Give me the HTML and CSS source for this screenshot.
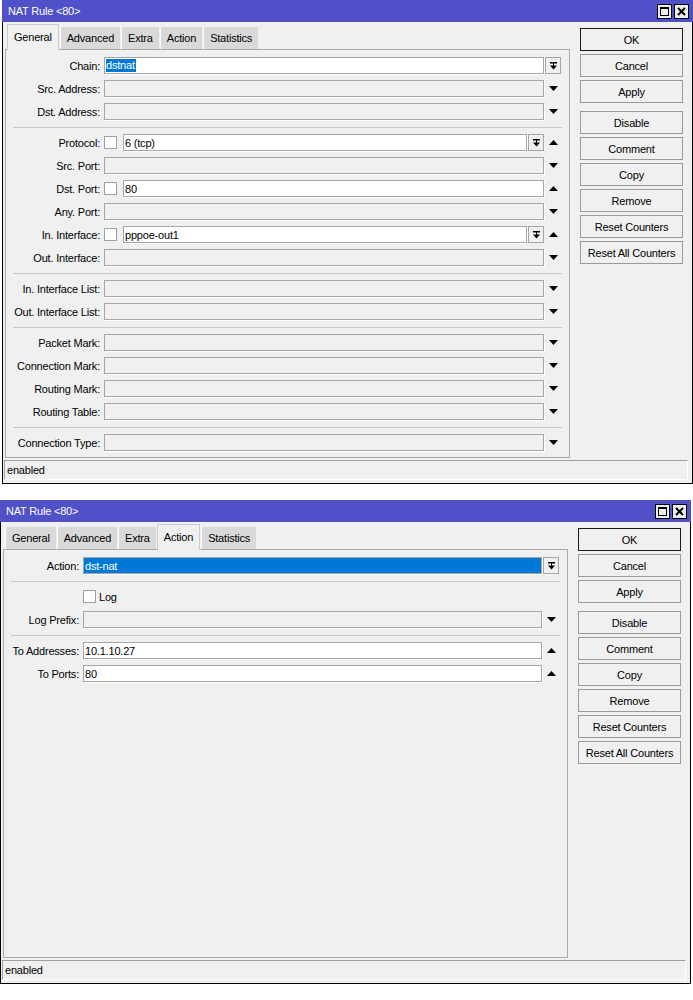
FILE: index.html
```html
<!DOCTYPE html>
<html lang="en">
<head>
<meta charset="utf-8">
<title>NAT Rule &lt;80&gt;</title>
<link rel="stylesheet" href="styles.css">
</head>
<body>

<!-- NAT rule window, General tab -->
<div class="win win-general">
  <div class="titlebar">
    <span class="title">NAT Rule &lt;80&gt;</span>
    <div class="title-btns">
      <span class="tbtn"><svg width="11" height="11" viewBox="0 0 11 11"><rect x="1" y="1" width="9" height="2"/><rect x="1.5" y="1.5" width="8" height="8" fill="none" stroke="#000"/></svg></span>
      <span class="tbtn"><svg width="11" height="11" viewBox="0 0 11 11"><path d="M2 2L9 9M9 2L2 9" stroke="#000" stroke-width="2"/></svg></span>
    </div>
  </div>
  <div class="frame">
    <div class="main">
      <div class="left">
        <div class="tabs">
          <div class="tab tab-active">General</div>
          <div class="tab">Advanced</div>
          <div class="tab">Extra</div>
          <div class="tab">Action</div>
          <div class="tab">Statistics</div>
        </div>
        <div class="panel">
          <div class="section">
            <div class="row">
              <span class="lbl">Chain:</span>
              <div class="fld"><div class="input on"><span class="sel">dstnat</span></div></div>
              <div class="ico"><span class="combo"><svg width="7" height="8" viewBox="0 0 7 8"><path d="M0 0h7v1.5H0zM3 1.5h1v2H3zM0 3.5h7L3.5 7.5z"/></svg></span></div>
            </div>
            <div class="row">
              <span class="lbl">Src. Address:</span>
              <div class="fld"><div class="input"></div></div>
              <div class="ico"><svg width="9" height="5" viewBox="0 0 9 5"><path d="M0 0h9L4.5 5z"/></svg></div>
            </div>
            <div class="row">
              <span class="lbl">Dst. Address:</span>
              <div class="fld"><div class="input"></div></div>
              <div class="ico"><svg width="9" height="5" viewBox="0 0 9 5"><path d="M0 0h9L4.5 5z"/></svg></div>
            </div>
          </div>
          <div class="sep"></div>
          <div class="section">
            <div class="row">
              <span class="lbl">Protocol:</span>
              <div class="fld"><span class="check"></span><div class="input on">6 (tcp)</div><span class="combo combo-inline"><svg width="7" height="8" viewBox="0 0 7 8"><path d="M0 0h7v1.5H0zM3 1.5h1v2H3zM0 3.5h7L3.5 7.5z"/></svg></span></div>
              <div class="ico"><svg width="9" height="5" viewBox="0 0 9 5"><path d="M0 5h9L4.5 0z"/></svg></div>
            </div>
            <div class="row">
              <span class="lbl">Src. Port:</span>
              <div class="fld"><div class="input"></div></div>
              <div class="ico"><svg width="9" height="5" viewBox="0 0 9 5"><path d="M0 0h9L4.5 5z"/></svg></div>
            </div>
            <div class="row">
              <span class="lbl">Dst. Port:</span>
              <div class="fld"><span class="check"></span><div class="input on">80</div></div>
              <div class="ico"><svg width="9" height="5" viewBox="0 0 9 5"><path d="M0 5h9L4.5 0z"/></svg></div>
            </div>
            <div class="row">
              <span class="lbl">Any. Port:</span>
              <div class="fld"><div class="input"></div></div>
              <div class="ico"><svg width="9" height="5" viewBox="0 0 9 5"><path d="M0 0h9L4.5 5z"/></svg></div>
            </div>
            <div class="row">
              <span class="lbl">In. Interface:</span>
              <div class="fld"><span class="check"></span><div class="input on">pppoe-out1</div><span class="combo combo-inline"><svg width="7" height="8" viewBox="0 0 7 8"><path d="M0 0h7v1.5H0zM3 1.5h1v2H3zM0 3.5h7L3.5 7.5z"/></svg></span></div>
              <div class="ico"><svg width="9" height="5" viewBox="0 0 9 5"><path d="M0 5h9L4.5 0z"/></svg></div>
            </div>
            <div class="row">
              <span class="lbl">Out. Interface:</span>
              <div class="fld"><div class="input"></div></div>
              <div class="ico"><svg width="9" height="5" viewBox="0 0 9 5"><path d="M0 0h9L4.5 5z"/></svg></div>
            </div>
          </div>
          <div class="sep"></div>
          <div class="section">
            <div class="row">
              <span class="lbl">In. Interface List:</span>
              <div class="fld"><div class="input"></div></div>
              <div class="ico"><svg width="9" height="5" viewBox="0 0 9 5"><path d="M0 0h9L4.5 5z"/></svg></div>
            </div>
            <div class="row">
              <span class="lbl">Out. Interface List:</span>
              <div class="fld"><div class="input"></div></div>
              <div class="ico"><svg width="9" height="5" viewBox="0 0 9 5"><path d="M0 0h9L4.5 5z"/></svg></div>
            </div>
          </div>
          <div class="sep"></div>
          <div class="section">
            <div class="row">
              <span class="lbl">Packet Mark:</span>
              <div class="fld"><div class="input"></div></div>
              <div class="ico"><svg width="9" height="5" viewBox="0 0 9 5"><path d="M0 0h9L4.5 5z"/></svg></div>
            </div>
            <div class="row">
              <span class="lbl">Connection Mark:</span>
              <div class="fld"><div class="input"></div></div>
              <div class="ico"><svg width="9" height="5" viewBox="0 0 9 5"><path d="M0 0h9L4.5 5z"/></svg></div>
            </div>
            <div class="row">
              <span class="lbl">Routing Mark:</span>
              <div class="fld"><div class="input"></div></div>
              <div class="ico"><svg width="9" height="5" viewBox="0 0 9 5"><path d="M0 0h9L4.5 5z"/></svg></div>
            </div>
            <div class="row">
              <span class="lbl">Routing Table:</span>
              <div class="fld"><div class="input"></div></div>
              <div class="ico"><svg width="9" height="5" viewBox="0 0 9 5"><path d="M0 0h9L4.5 5z"/></svg></div>
            </div>
          </div>
          <div class="sep"></div>
          <div class="section">
            <div class="row">
              <span class="lbl">Connection Type:</span>
              <div class="fld"><div class="input"></div></div>
              <div class="ico"><svg width="9" height="5" viewBox="0 0 9 5"><path d="M0 0h9L4.5 5z"/></svg></div>
            </div>
          </div>
        </div>
      </div>
      <div class="buttons">
        <button class="btn btn-default">OK</button>
        <button class="btn">Cancel</button>
        <button class="btn">Apply</button>
        <button class="btn btn-spaced">Disable</button>
        <button class="btn">Comment</button>
        <button class="btn">Copy</button>
        <button class="btn">Remove</button>
        <button class="btn">Reset Counters</button>
        <button class="btn">Reset All Counters</button>
      </div>
    </div>
    <div class="status">enabled</div>
  </div>
</div>

<!-- NAT rule window, Action tab -->
<div class="win win-action">
  <div class="titlebar">
    <span class="title">NAT Rule &lt;80&gt;</span>
    <div class="title-btns">
      <span class="tbtn"><svg width="11" height="11" viewBox="0 0 11 11"><rect x="1" y="1" width="9" height="2"/><rect x="1.5" y="1.5" width="8" height="8" fill="none" stroke="#000"/></svg></span>
      <span class="tbtn"><svg width="11" height="11" viewBox="0 0 11 11"><path d="M2 2L9 9M9 2L2 9" stroke="#000" stroke-width="2"/></svg></span>
    </div>
  </div>
  <div class="frame">
    <div class="main">
      <div class="left">
        <div class="tabs">
          <div class="tab">General</div>
          <div class="tab">Advanced</div>
          <div class="tab">Extra</div>
          <div class="tab tab-active">Action</div>
          <div class="tab">Statistics</div>
        </div>
        <div class="panel">
          <div class="section">
            <div class="row">
              <span class="lbl">Action:</span>
              <div class="fld"><div class="input picked">dst-nat</div></div>
              <div class="ico"><span class="combo"><svg width="7" height="8" viewBox="0 0 7 8"><path d="M0 0h7v1.5H0zM3 1.5h1v2H3zM0 3.5h7L3.5 7.5z"/></svg></span></div>
            </div>
          </div>
          <div class="sep"></div>
          <div class="section">
            <div class="row">
              <span class="lbl"></span>
              <div class="fld"><span class="check check-text"></span><span>Log</span></div>
              <div class="ico"></div>
            </div>
            <div class="row">
              <span class="lbl">Log Prefix:</span>
              <div class="fld"><div class="input"></div></div>
              <div class="ico"><svg width="9" height="5" viewBox="0 0 9 5"><path d="M0 0h9L4.5 5z"/></svg></div>
            </div>
          </div>
          <div class="sep"></div>
          <div class="section">
            <div class="row">
              <span class="lbl">To Addresses:</span>
              <div class="fld"><div class="input on">10.1.10.27</div></div>
              <div class="ico"><svg width="9" height="5" viewBox="0 0 9 5"><path d="M0 5h9L4.5 0z"/></svg></div>
            </div>
            <div class="row">
              <span class="lbl">To Ports:</span>
              <div class="fld"><div class="input on">80</div></div>
              <div class="ico"><svg width="9" height="5" viewBox="0 0 9 5"><path d="M0 5h9L4.5 0z"/></svg></div>
            </div>
          </div>
        </div>
      </div>
      <div class="buttons">
        <button class="btn btn-default">OK</button>
        <button class="btn">Cancel</button>
        <button class="btn">Apply</button>
        <button class="btn btn-spaced">Disable</button>
        <button class="btn">Comment</button>
        <button class="btn">Copy</button>
        <button class="btn">Remove</button>
        <button class="btn">Reset Counters</button>
        <button class="btn">Reset All Counters</button>
      </div>
    </div>
    <div class="status">enabled</div>
  </div>
</div>

</body>
</html>
```

FILE: styles.css
```css
* {
  box-sizing: border-box;
}

body {
  margin: 0;
  background: #fff;
  font-family: "Liberation Sans", Arial, sans-serif;
  font-size: 11px;
  letter-spacing: -0.2px;
  color: #000;
}

/* ---- window ---- */
.win {
  width: 691px;
}

.win + .win {
  margin-top: 16px;
}

.win-general {
  margin-left: 2px;
  --label-w: 94px;
}

.win-action {
  --label-w: 75px;
}

.titlebar {
  height: 22px;
  background: #5050c8;
  color: #fff;
  display: flex;
  align-items: center;
  justify-content: space-between;
  padding: 0 4px 0 6px;
}

.title-btns {
  display: flex;
  gap: 2px;
}

.tbtn {
  width: 15px;
  height: 15px;
  border: 1px solid #000;
  background: #ececec;
  display: flex;
  align-items: center;
  justify-content: center;
}

.frame {
  background: #f0f0f0;
  border: 1px solid #000;
  border-top: 0;
}

.main {
  display: flex;
  align-items: flex-start;
}

.left {
  margin-left: 2px;
  width: 565px;
}

/* ---- tabs ---- */
.tabs {
  height: 27px;
  display: flex;
  align-items: flex-end;
  gap: 1px;
  padding-left: 2px;
}

.tab {
  height: 22px;
  line-height: 22px;
  padding: 0 6px;
  background: #d9d9d9;
  border-left: 1px solid #fbfbfb;
  white-space: nowrap;
}

.tab-active {
  position: relative;
  z-index: 1;
  height: 26px;
  line-height: 24px;
  margin-bottom: -1px;
  background: #f0f0f0;
  border: 1px solid #cdcdcd;
  border-bottom: 0;
}

/* ---- form panel ---- */
.panel {
  height: 409px;
  border: 1px solid #a9a9a9;
  padding: 7px 7px 0 0;
  display: flex;
  flex-direction: column;
}

.section {
  display: flex;
  flex-direction: column;
  gap: 6px;
}

.sep {
  height: 1px;
  background: #c8c8c8;
  margin: 7px 0 6px 7px;
}

.row {
  display: flex;
  align-items: center;
  height: 17px;
}

.lbl {
  flex: none;
  width: var(--label-w);
  margin-right: 4px;
  text-align: right;
  white-space: nowrap;
}

.fld {
  flex: 1;
  min-width: 0;
  height: 17px;
  display: flex;
  align-items: center;
}

.ico {
  flex: none;
  width: 18px;
  height: 17px;
  display: flex;
  align-items: center;
  justify-content: center;
}

.input {
  flex: 1;
  min-width: 0;
  height: 17px;
  display: flex;
  align-items: center;
  padding: 0 1px;
  border: 1px solid #a6a6a6;
  background: #f0f0f0;
  box-shadow: 1px 1px 0 #fff;
  white-space: nowrap;
  overflow: hidden;
}

.input.on {
  background: #fff;
}

.input.picked {
  background: #0078d7;
  color: #fff;
}

.sel {
  background: #0078d7;
  color: #fff;
  height: 13px;
  line-height: 13px;
  padding: 0 1px 0 0;
}

.check {
  flex: none;
  width: 13px;
  height: 13px;
  margin-right: 6px;
  border: 1px solid #a0a0a0;
  background: #fff;
}

.check-text {
  margin-right: 3px;
}

.combo {
  flex: none;
  width: 16px;
  height: 17px;
  border: 1px solid #a6a6a6;
  background: #f0f0f0;
  display: flex;
  align-items: center;
  justify-content: center;
}

.combo-inline {
  margin-left: 1px;
}

/* ---- command buttons ---- */
.buttons {
  flex: none;
  width: 103px;
  margin-left: 10px;
  padding-top: 6px;
  display: flex;
  flex-direction: column;
  gap: 3px;
}

.btn {
  height: 23px;
  padding: 0;
  border: 1px solid #9a9a9a;
  background: #f0f0f0;
  font: inherit;
  letter-spacing: inherit;
  color: #000;
  text-align: center;
  white-space: nowrap;
}

.btn-default {
  border-color: #1a1a1a;
}

.btn-spaced {
  margin-top: 5px;
}

/* ---- status bar ---- */
.status {
  height: 20px;
  margin: 2px 4px 3px 1px;
  padding-left: 2px;
  line-height: 18px;
  border: 1px solid;
  border-color: #a0a0a0 #fff #fff #a0a0a0;
}
```
